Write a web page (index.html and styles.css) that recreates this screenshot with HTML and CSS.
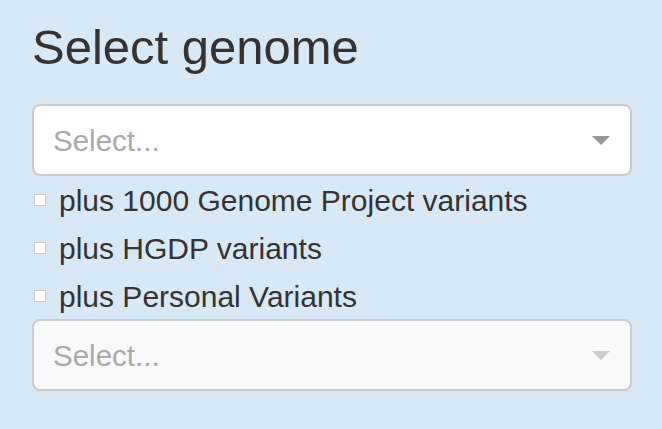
FILE: index.html
```html
<!DOCTYPE html>
<html lang="en">
<head>
<meta charset="utf-8">
<title>Select genome</title>
<link rel="stylesheet" href="styles.css">
</head>
<body>
<div class="panel">
  <h3 class="title">Select genome</h3>
  <div class="select">
    <span class="placeholder">Select...</span>
    <span class="arrow"></span>
  </div>
  <div class="opts">
    <label class="opt"><span class="box"></span><span>plus 1000 Genome Project variants</span></label>
    <label class="opt"><span class="box"></span><span>plus HGDP variants</span></label>
    <label class="opt"><span class="box"></span><span>plus Personal Variants</span></label>
  </div>
  <div class="select disabled">
    <span class="placeholder">Select...</span>
    <span class="arrow"></span>
  </div>
</div>
</body>
</html>
```

FILE: styles.css
```css
html, body {
  margin: 0;
  padding: 0;
  background: #d9e8f5;
  height: 100%;
}
body {
  font-family: "Liberation Sans", Arial, sans-serif;
  color: #333;
}
.panel {
  width: 600px;
  padding: 0 30px 0 32px;
}
.title {
  margin: 20px 0 30px;
  font-size: 49px;
  line-height: 54px;
  font-weight: normal;
  color: #333;
}
.select {
  box-sizing: border-box;
  height: 72px;
  border: 2px solid #cccccc;
  border-radius: 8px;
  background: #fff;
  display: flex;
  align-items: center;
  padding: 0 20px 0 19px;
}
.select.disabled {
  background: #f9f9f9;
}
.placeholder {
  flex: 1;
  font-size: 29.5px;
  line-height: 30px;
  padding-top: 1px;
  color: #aaaaaa;
}
.arrow {
  width: 0;
  height: 0;
  border-left: 9.5px solid transparent;
  border-right: 9.5px solid transparent;
  border-top: 9px solid #999;
  margin-top: 1px;
}
.disabled .arrow {
  border-top-color: #cccccc;
}
.opts {
  padding-top: 5px;
  display: flex;
  flex-direction: column;
  gap: 9px;
}
.opt {
  display: flex;
  align-items: flex-start;
  font-size: 30px;
  line-height: 39px;
  color: #333;
}
.opt:last-child {
  margin-bottom: 3px;
}
.box {
  box-sizing: border-box;
  width: 12px;
  height: 12px;
  margin: 13px 13px 0 2px;
  background: #fff;
  border: 1px solid #c9c9c9;
  border-radius: 1px;
}
```
